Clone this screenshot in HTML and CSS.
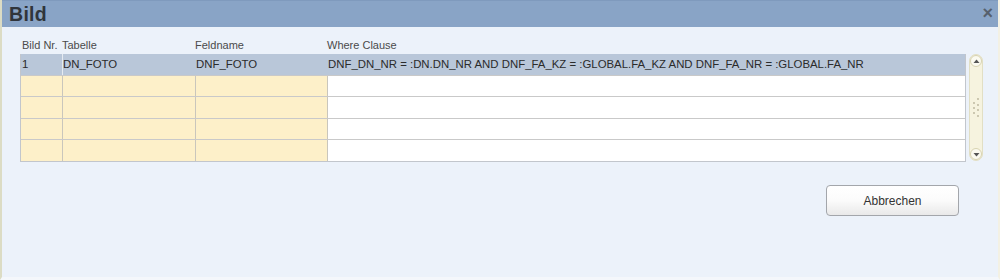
FILE: index.html
```html
<!DOCTYPE html>
<html>
<head>
<meta charset="utf-8">
<link rel="stylesheet" href="styles.css">
</head>
<body>
<div class="dialog">
  <div class="titlebar">
    <span class="title">Bild</span>
    <span class="close">×</span>
  </div>
  <div class="content">
    <div class="grid-wrap">
      <div class="grid">
        <div class="heads">
          <div class="h c1">Bild Nr.</div>
          <div class="h c2">Tabelle</div>
          <div class="h c3">Feldname</div>
          <div class="h c4">Where Clause</div>
        </div>
        <div class="table">
          <div class="row sel">
            <div class="cell c1">1</div>
            <div class="cell c2">DN_FOTO</div>
            <div class="cell c3">DNF_FOTO</div>
            <div class="cell c4">DNF_DN_NR = :DN.DN_NR AND DNF_FA_KZ = :GLOBAL.FA_KZ AND DNF_FA_NR = :GLOBAL.FA_NR</div>
          </div>
          <div class="row"><div class="cell c1"></div><div class="cell c2"></div><div class="cell c3"></div><div class="cell c4"></div></div>
          <div class="row"><div class="cell c1"></div><div class="cell c2"></div><div class="cell c3"></div><div class="cell c4"></div></div>
          <div class="row"><div class="cell c1"></div><div class="cell c2"></div><div class="cell c3"></div><div class="cell c4"></div></div>
          <div class="row last"><div class="cell c1"></div><div class="cell c2"></div><div class="cell c3"></div><div class="cell c4"></div></div>
        </div>
      </div>
      <div class="scrollbar">
        <div class="sbtn"><svg width="9" height="9" viewBox="0 0 9 9"><path d="M1.5 6 L4.5 2.5 L7.5 6 Z" fill="#555"/></svg></div>
        <div class="grip">
          <svg width="10" height="22" viewBox="0 0 10 22">
            <g fill="#b9b49a">
              <circle cx="7" cy="2" r="0.9"/><circle cx="3" cy="6" r="0.9"/><circle cx="7" cy="8" r="0.9"/>
              <circle cx="3" cy="11" r="0.9"/><circle cx="7" cy="13" r="0.9"/><circle cx="3" cy="16" r="0.9"/>
              <circle cx="7" cy="19" r="0.9"/>
            </g>
          </svg>
        </div>
        <div class="sbtn"><svg width="9" height="9" viewBox="0 0 9 9"><path d="M1.5 3 L4.5 6.5 L7.5 3 Z" fill="#555"/></svg></div>
      </div>
    </div>
    <div class="actions">
      <button class="btn">Abbrechen</button>
    </div>
  </div>
</div>
</body>
</html>
```

FILE: styles.css
```css
html, body {
  margin: 0;
  padding: 0;
}
body {
  width: 1000px;
  height: 280px;
  overflow: hidden;
  font-family: "Liberation Sans", Arial, sans-serif;
  background: #ecf2fa;
}
.dialog {
  width: 1000px;
  height: 280px;
  display: flex;
  flex-direction: column;
  box-sizing: border-box;
  border-left: 2px solid #dcdcc4;
  border-right: 2px solid #f3f1e4;
  border-bottom: 3px solid #f4f7fb;
}
.titlebar {
  height: 27px;
  background: #89a4c6;
  border-top: 1px solid #7f9abd;
  box-sizing: border-box;
  display: flex;
  align-items: center;
  justify-content: space-between;
  padding: 0 5px 0 7px;
}
.title {
  font-size: 19.5px;
  font-weight: bold;
  color: #30353b;
  letter-spacing: 0.3px;
}
.close {
  font-size: 18px;
  font-weight: bold;
  color: #56606d;
  line-height: 1;
  margin-top: -2px;
}
.content {
  flex: 1;
  background: #ecf2fa;
  padding: 11px 0 0 18px;
}
.grid-wrap {
  display: flex;
  align-items: flex-start;
}
.grid {
  width: 946px;
}
.heads {
  display: flex;
  height: 16px;
  font-size: 11px;
  color: #4a4a4a;
}
.h {
  box-sizing: border-box;
  line-height: 14px;
}
.h.c1 { padding-left: 2px; }
.c1 { width: 42px; }
.c2 { width: 133px; }
.c3 { width: 132px; }
.c4 { flex: 1; }
.table {
  border: 1px solid #c2c6cc;
  border-top: none;
}
.row {
  display: flex;
  height: 21.5px;
  border-bottom: 1px solid #c9c9c9;
  box-sizing: border-box;
}
.row.last { border-bottom: none; height: 21px; }
.cell {
  box-sizing: border-box;
  border-right: 1px solid #c9c6bc;
  background: #fdf0c9;
  font-size: 11.4px;
  color: #2b2b2b;
  padding-left: 0;
  line-height: 21px;
  white-space: nowrap;
  overflow: hidden;
}
.cell.c1 { padding-left: 1px; }
.cell.c4 {
  background: #ffffff;
  border-right: none;
}
.row.sel .cell {
  background: #b9c7d9;
  border-right-color: #b9c7d9;
}
.row.sel .cell.c1 { border-right-color: #e6ebf1; }
.scrollbar {
  margin-top: 16px;
  margin-left: 3px;
  width: 14px;
  height: 107px;
  background: #f6f3df;
  border: 1px solid #e2dfc4;
  border-radius: 7px;
  box-sizing: border-box;
  display: flex;
  flex-direction: column;
  justify-content: space-between;
  align-items: center;
}
.sbtn {
  width: 12px;
  height: 12px;
  border-radius: 50%;
  background: #fbfaf0;
  border: 1px solid #d8d3b2;
  box-sizing: border-box;
  display: flex;
  align-items: center;
  justify-content: center;
}
.grip {
  display: flex;
}
.actions {
  display: flex;
  justify-content: flex-end;
  padding: 23px 39px 0 0;
}
.btn {
  width: 133px;
  height: 31px;
  border: 1px solid #a3a6ab;
  border-radius: 4px;
  background: linear-gradient(#ffffff 0%, #fbfbfb 50%, #e9e9e9 100%);
  font-family: "Liberation Sans", Arial, sans-serif;
  font-size: 12px;
  color: #333;
  padding: 0;
}
```
